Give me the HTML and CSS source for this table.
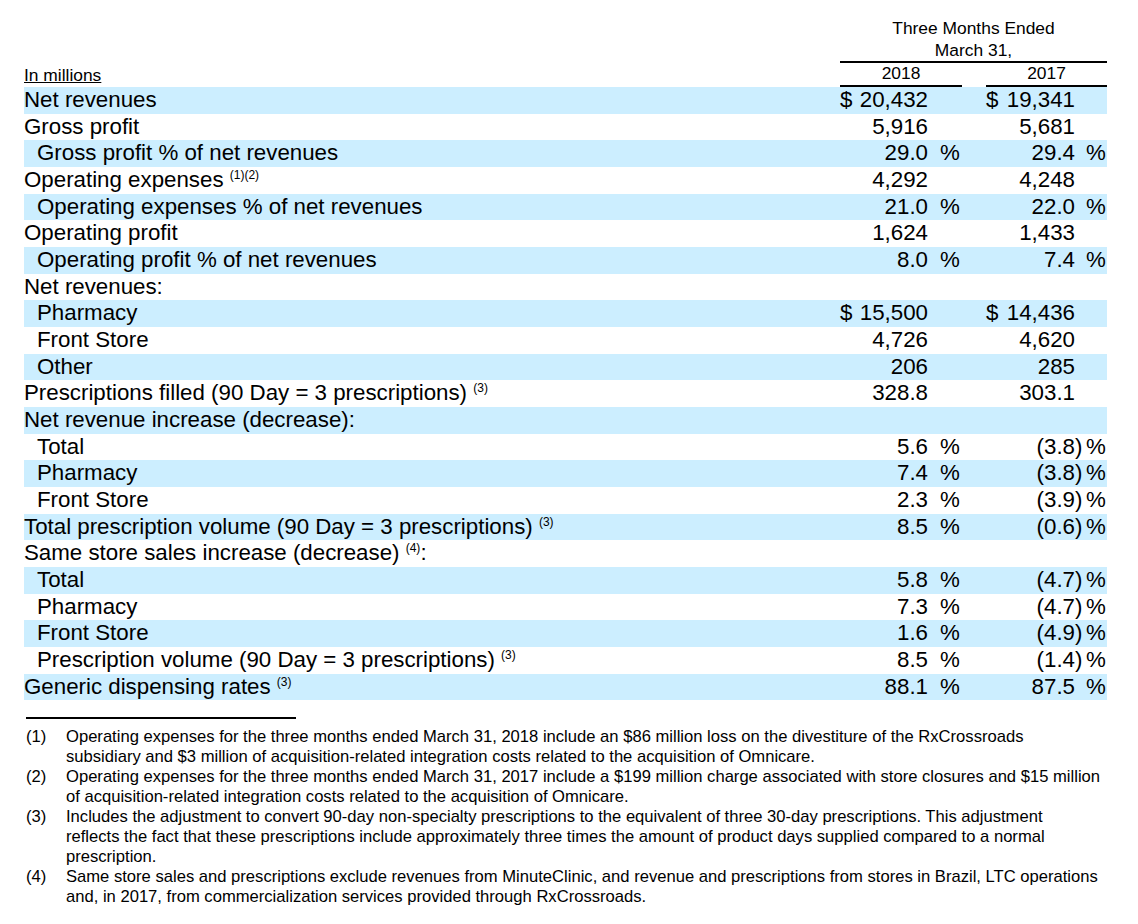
FILE: index.html
```html
<!DOCTYPE html>
<html>
<head>
<meta charset="utf-8">
<link rel="stylesheet" href="styles.css">
</head>
<body>
<div class="page">
<table class="fin">
  <colgroup>
    <col class="c-label"><col class="c-v1"><col class="c-gap"><col class="c-v2">
  </colgroup>
  <thead>
    <tr class="h1">
      <th></th>
      <th colspan="3" class="period">Three Months Ended<br>March 31,</th>
    </tr>
    <tr class="h2">
      <th class="units"><span>In millions</span></th>
      <th class="year">2018</th>
      <th></th>
      <th class="year">2017</th>
    </tr>
  </thead>
  <tbody>
    <tr><td class="lb">Net revenues</td>
      <td><div class="v v1"><span class="cur">$</span><span class="n">20,432</span><span class="s"></span></div></td><td></td>
      <td><div class="v v2"><span class="cur">$</span><span class="n">19,341</span><span class="s"></span></div></td></tr>
    <tr><td class="lb">Gross profit</td>
      <td><div class="v v1"><span class="n">5,916</span><span class="s"></span></div></td><td></td>
      <td><div class="v v2"><span class="n">5,681</span><span class="s"></span></div></td></tr>
    <tr><td class="lb ind">Gross profit % of net revenues</td>
      <td><div class="v v1"><span class="n">29.0</span><span class="s"><span class="p"></span>%</span></div></td><td></td>
      <td><div class="v v2"><span class="n">29.4</span><span class="s"><span class="p"></span>%</span></div></td></tr>
    <tr><td class="lb">Operating expenses <sup>(1)(2)</sup></td>
      <td><div class="v v1"><span class="n">4,292</span><span class="s"></span></div></td><td></td>
      <td><div class="v v2"><span class="n">4,248</span><span class="s"></span></div></td></tr>
    <tr><td class="lb ind">Operating expenses % of net revenues</td>
      <td><div class="v v1"><span class="n">21.0</span><span class="s"><span class="p"></span>%</span></div></td><td></td>
      <td><div class="v v2"><span class="n">22.0</span><span class="s"><span class="p"></span>%</span></div></td></tr>
    <tr><td class="lb">Operating profit</td>
      <td><div class="v v1"><span class="n">1,624</span><span class="s"></span></div></td><td></td>
      <td><div class="v v2"><span class="n">1,433</span><span class="s"></span></div></td></tr>
    <tr><td class="lb ind">Operating profit % of net revenues</td>
      <td><div class="v v1"><span class="n">8.0</span><span class="s"><span class="p"></span>%</span></div></td><td></td>
      <td><div class="v v2"><span class="n">7.4</span><span class="s"><span class="p"></span>%</span></div></td></tr>
    <tr><td class="lb">Net revenues:</td><td></td><td></td><td></td></tr>
    <tr><td class="lb ind">Pharmacy</td>
      <td><div class="v v1"><span class="cur">$</span><span class="n">15,500</span><span class="s"></span></div></td><td></td>
      <td><div class="v v2"><span class="cur">$</span><span class="n">14,436</span><span class="s"></span></div></td></tr>
    <tr><td class="lb ind">Front Store</td>
      <td><div class="v v1"><span class="n">4,726</span><span class="s"></span></div></td><td></td>
      <td><div class="v v2"><span class="n">4,620</span><span class="s"></span></div></td></tr>
    <tr><td class="lb ind">Other</td>
      <td><div class="v v1"><span class="n">206</span><span class="s"></span></div></td><td></td>
      <td><div class="v v2"><span class="n">285</span><span class="s"></span></div></td></tr>
    <tr><td class="lb">Prescriptions filled (90 Day = 3 prescriptions) <sup>(3)</sup></td>
      <td><div class="v v1"><span class="n">328.8</span><span class="s"></span></div></td><td></td>
      <td><div class="v v2"><span class="n">303.1</span><span class="s"></span></div></td></tr>
    <tr><td class="lb">Net revenue increase (decrease):</td><td></td><td></td><td></td></tr>
    <tr><td class="lb ind">Total</td>
      <td><div class="v v1"><span class="n">5.6</span><span class="s"><span class="p"></span>%</span></div></td><td></td>
      <td><div class="v v2"><span class="n">(3.8</span><span class="s"><span class="p">)</span>%</span></div></td></tr>
    <tr><td class="lb ind">Pharmacy</td>
      <td><div class="v v1"><span class="n">7.4</span><span class="s"><span class="p"></span>%</span></div></td><td></td>
      <td><div class="v v2"><span class="n">(3.8</span><span class="s"><span class="p">)</span>%</span></div></td></tr>
    <tr><td class="lb ind">Front Store</td>
      <td><div class="v v1"><span class="n">2.3</span><span class="s"><span class="p"></span>%</span></div></td><td></td>
      <td><div class="v v2"><span class="n">(3.9</span><span class="s"><span class="p">)</span>%</span></div></td></tr>
    <tr><td class="lb">Total prescription volume (90 Day = 3 prescriptions) <sup>(3)</sup></td>
      <td><div class="v v1"><span class="n">8.5</span><span class="s"><span class="p"></span>%</span></div></td><td></td>
      <td><div class="v v2"><span class="n">(0.6</span><span class="s"><span class="p">)</span>%</span></div></td></tr>
    <tr><td class="lb">Same store sales increase (decrease) <sup>(4)</sup>:</td><td></td><td></td><td></td></tr>
    <tr><td class="lb ind">Total</td>
      <td><div class="v v1"><span class="n">5.8</span><span class="s"><span class="p"></span>%</span></div></td><td></td>
      <td><div class="v v2"><span class="n">(4.7</span><span class="s"><span class="p">)</span>%</span></div></td></tr>
    <tr><td class="lb ind">Pharmacy</td>
      <td><div class="v v1"><span class="n">7.3</span><span class="s"><span class="p"></span>%</span></div></td><td></td>
      <td><div class="v v2"><span class="n">(4.7</span><span class="s"><span class="p">)</span>%</span></div></td></tr>
    <tr><td class="lb ind">Front Store</td>
      <td><div class="v v1"><span class="n">1.6</span><span class="s"><span class="p"></span>%</span></div></td><td></td>
      <td><div class="v v2"><span class="n">(4.9</span><span class="s"><span class="p">)</span>%</span></div></td></tr>
    <tr><td class="lb ind">Prescription volume (90 Day = 3 prescriptions) <sup>(3)</sup></td>
      <td><div class="v v1"><span class="n">8.5</span><span class="s"><span class="p"></span>%</span></div></td><td></td>
      <td><div class="v v2"><span class="n">(1.4</span><span class="s"><span class="p">)</span>%</span></div></td></tr>
    <tr><td class="lb">Generic dispensing rates <sup>(3)</sup></td>
      <td><div class="v v1"><span class="n">88.1</span><span class="s"><span class="p"></span>%</span></div></td><td></td>
      <td><div class="v v2"><span class="n">87.5</span><span class="s"><span class="p"></span>%</span></div></td></tr>
  </tbody>
</table>

<div class="notes">
  <div class="rule"></div>
  <div class="note"><span class="mk">(1)</span><span class="tx">Operating expenses for the three months ended March 31, 2018 include an $86 million loss on the divestiture of the RxCrossroads<br>subsidiary and $3 million of acquisition-related integration costs related to the acquisition of Omnicare.</span></div>
  <div class="note"><span class="mk">(2)</span><span class="tx">Operating expenses for the three months ended March 31, 2017 include a $199 million charge associated with store closures and $15 million<br>of acquisition-related integration costs related to the acquisition of Omnicare.</span></div>
  <div class="note"><span class="mk">(3)</span><span class="tx">Includes the adjustment to convert 90-day non-specialty prescriptions to the equivalent of three 30-day prescriptions. This adjustment<br>reflects the fact that these prescriptions include approximately three times the amount of product days supplied compared to a normal<br>prescription.</span></div>
  <div class="note"><span class="mk">(4)</span><span class="tx">Same store sales and prescriptions exclude revenues from MinuteClinic, and revenue and prescriptions from stores in Brazil, LTC operations<br>and, in 2017, from commercialization services provided through RxCrossroads.</span></div>
</div>
</div>
</body>
</html>
```

FILE: styles.css
```css
html, body {
  margin: 0;
  padding: 0;
  background: #fff;
  color: #000;
  font-family: "Liberation Sans", Arial, Helvetica, sans-serif;
}

.page {
  padding: 18px 0 0 24px;
}

.fin {
  border-collapse: separate;
  border-spacing: 0;
  table-layout: fixed;
  width: 1083px;
}

.c-label { width: 816px; }
.c-v1 { width: 122px; }
.c-gap { width: 24px; }
.c-v2 { width: 121px; }

.fin th {
  font-weight: normal;
  font-size: 17.4px;
  line-height: 21.67px;
  padding: 0;
}

.period {
  text-align: center;
  border-bottom: 2px solid #000;
}

.h2 th {
  vertical-align: bottom;
}

.units {
  text-align: left;
  padding-bottom: 2px;
}
.units span {
  text-decoration: underline;
}

.year {
  text-align: center;
  border-bottom: 2px solid #000;
}

.fin td {
  padding: 0;
  height: 26.67px;
  font-size: 22.3px;
  line-height: 26.67px;
  white-space: nowrap;
}

.fin tbody tr:nth-child(odd) td {
  background: #cceeff;
}

.lb.ind {
  padding-left: 13px;
}

sup {
  font-size: 12px;
  line-height: 0;
  vertical-align: 8px;
}

.v {
  display: flex;
}

.cur {
  flex: none;
}

.n {
  flex: 1;
  text-align: right;
}

.s {
  flex: none;
  display: block;
}

.v1 .s { width: 34px; }
.v2 .s { width: 32px; }

.p {
  display: inline-block;
}

.v1 .p { width: 12px; }
.v2 .p { width: 11px; }

.notes {
  padding-left: 2px;
  margin-top: 17px;
}

.rule {
  width: 270px;
  height: 2px;
  background: #000;
  margin-bottom: 8px;
}

.note {
  display: flex;
  font-size: 16.6px;
  line-height: 20px;
  white-space: nowrap;
}

.mk {
  width: 40px;
  flex: none;
}
```
